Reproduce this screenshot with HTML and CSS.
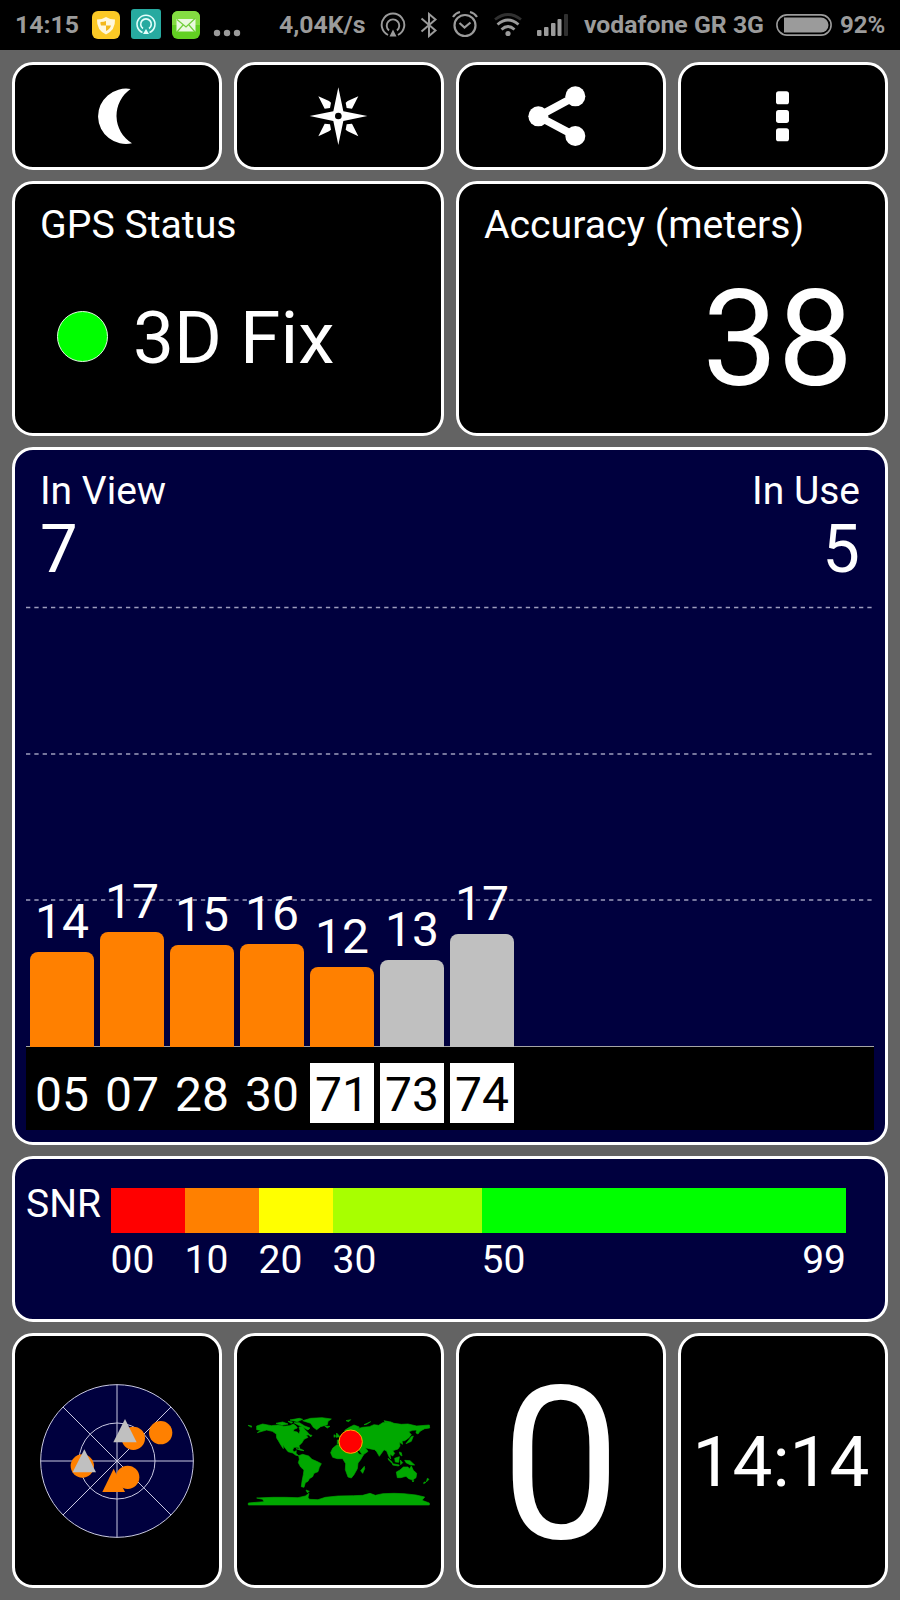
FILE: index.html
```html
<!DOCTYPE html>
<html lang="en">
<head>
    <meta charset="UTF-8">
    <meta name="viewport" content="width=device-width, initial-scale=1.0">
    <title>GPS Status</title>
    <link rel="stylesheet" href="styles.css">
</head>
<body>

    <header class="status-bar">
        <span class="time">14:15</span>
        <svg class="app-icon shield" viewBox="0 0 28 28">
            <rect width="28" height="28" rx="6" fill="#fbc926"/>
            <path d="M14 6 Q18 8.500 23 8.500 Q23.500 19 14 23.500 Q4.500 19 5 8.500 Q10 8.500 14 6 Z" fill="#fff8dc"/>
            <path d="M14 10 V14.500 H9 Q8.200 12.500 8.500 11 Q12 11 14 10 Z M14 14.500 H19 Q18 18 14 20 Z" fill="#f3b81c"/>
        </svg>
        <svg class="app-icon hotspot" viewBox="0 0 30 30">
            <rect width="30" height="30" rx="3" fill="#27aaa0"/>
            <g fill="none" stroke="#e4fffb" stroke-width="1.600">
                <path d="M11.500 23.500 A9 9 0 1 1 18.500 23.500"/>
                <path d="M12 19.500 A5.300 5.300 0 1 1 18 19.500"/>
            </g>
            <path d="M15 20 L18 25 H12 Z" fill="#e4fffb"/>
        </svg>
        <svg class="app-icon mail" viewBox="0 0 28 28">
            <rect width="28" height="28" rx="6" fill="#62d022"/>
            <path d="M0 14 V6 A6 6 0 0 1 6 0 H22 A6 6 0 0 1 28 6 V14 Z" fill="#84dc42"/>
            <path d="M4.500 8 H23.500 V20.500 H4.500 Z" fill="#e9f9df"/>
            <path d="M5 8.500 L14 16 L23 7.500 M5 21 L11 14 M23 21 L17 14" fill="none" stroke="#70cf3a" stroke-width="1.200"/>
        </svg>
        <svg class="more" viewBox="0 0 28 8">
            <g fill="#9b9b9b"><circle cx="4" cy="4" r="3.200"/><circle cx="14" cy="4" r="3.200"/><circle cx="24" cy="4" r="3.200"/></g>
        </svg>
        <span class="speed">4,04K/s</span>
        <svg class="cast" viewBox="0 0 26 26">
            <g fill="none" stroke="#9b9b9b" stroke-width="1.900">
                <path d="M8 23 A11.300 11.300 0 1 1 18 23"/>
                <path d="M9 18.500 A6.300 6.300 0 1 1 17 18.500"/>
            </g>
            <path d="M13 17.500 L16.500 24.500 H9.500 Z" fill="#9b9b9b"/>
        </svg>
        <svg class="bluetooth" viewBox="0 0 18 26">
            <path d="M1.500 6.500 L15.500 18.500 L9 24 V2 L15.500 7.500 L1.500 19.500" fill="none" stroke="#9b9b9b" stroke-width="2"/>
        </svg>
        <svg class="alarm" viewBox="0 0 26 28">
            <g fill="none" stroke="#9b9b9b" stroke-width="2.200">
                <circle cx="13" cy="15.500" r="10.500"/>
                <path d="M7.500 13 L12.500 17.500 L18.500 12.500"/>
                <path d="M1 7 Q3.500 3 8 2 M25 7 Q22.500 3 18 2"/>
            </g>
        </svg>
        <svg class="wifi" viewBox="0 0 28 24">
            <g fill="none" stroke-width="2.800">
                <path d="M1 6.500 Q14 -3.500 27 6.500" stroke="#303030"/>
                <path d="M3.500 11.500 Q14 2.500 24.500 11.500" stroke="#9b9b9b"/>
                <path d="M7.500 16.500 Q14 10.500 20.500 16.500" stroke="#9b9b9b"/>
            </g>
            <circle cx="14" cy="20.500" r="2.600" fill="#9b9b9b"/>
        </svg>
        <svg class="signal" viewBox="0 0 32 22">
            <g fill="#9b9b9b">
                <rect x="0" y="16" width="4.500" height="6" rx="1"/>
                <rect x="7" y="13" width="4.500" height="9" rx="1"/>
                <rect x="14" y="9" width="4.500" height="13" rx="1"/>
                <rect x="20.500" y="5" width="4" height="17" rx="1"/>
            </g>
            <rect x="27" y="0" width="4" height="22" rx="1" fill="#303030"/>
        </svg>
        <span class="carrier">vodafone GR 3G</span>
        <svg class="battery" viewBox="0 0 56 22">
            <rect x="0.900" y="0.900" width="54.200" height="20.200" rx="10.100" fill="none" stroke="#9b9b9b" stroke-width="1.600"/>
            <path d="M8 3.500 H45 A7.500 7.500 0 0 1 45 18.500 H8 Z" fill="#9b9b9b"/>
        </svg>
        <span class="percent">92%</span>
    </header>

    <main class="dashboard">
        <button class="panel tool">
            <svg width="60" height="60" viewBox="0 0 180 180">
                <path d="M131 9 A84 83 0 1 0 135 172 A97 97 0 0 1 131 9 Z" fill="#fff"/>
            </svg>
        </button>
        <button class="panel tool">
            <svg width="60" height="60" viewBox="0 0 180 180">
                <g fill="#fff">
                    <path d="M88 4 L103 76 L175 90 L103 105 L88 177 L73 105 L2 90 L73 76 Z"/>
                    <path d="M28 31 L60 45 L66 50 L63 66 L47 68 Z M148 31 L116 45 L110 50 L113 66 L129 68 Z M28 151 L60 136 L66 131 L63 115 L47 113 Z M148 151 L116 136 L110 131 L113 115 L129 113 Z"/>
                </g>
                <circle cx="88" cy="90" r="10" fill="#000"/>
            </svg>
        </button>
        <button class="panel tool">
            <svg width="66" height="66" viewBox="0 0 198 198">
                <path d="M142 40 L31 100 L142 159" fill="none" stroke="#fff" stroke-width="23"/>
                <g fill="#fff"><circle cx="31" cy="100" r="30"/><circle cx="142" cy="40" r="30"/><circle cx="142" cy="159" r="30"/></g>
            </svg>
        </button>
        <button class="panel tool">
            <svg width="60" height="60" viewBox="0 0 180 180">
                <g fill="#fff">
                    <rect x="69" y="16" width="39" height="39" rx="8"/>
                    <rect x="69" y="72" width="39" height="39" rx="8"/>
                    <rect x="69" y="127" width="39" height="39" rx="8"/>
                </g>
            </svg>
        </button>

        <section class="panel half">
            <h2 class="panel-title">GPS Status</h2>
            <div class="fix">
                <span class="fix-dot"></span>
                <span>3D Fix</span>
            </div>
        </section>
        <section class="panel half">
            <h2 class="panel-title">Accuracy (meters)</h2>
            <div class="accuracy">38</div>
        </section>

        <section class="panel satellites">
            <div class="counts">
                <div>In View<strong>7</strong></div>
                <div class="in-use">In Use<strong>5</strong></div>
            </div>
            <div class="chart">
                <svg class="gridlines" width="848" height="441" viewBox="0 0 848 441">
                    <path d="M0 1.500 H847 M0 148 H847 M0 294 H847" stroke="#9d9dbd" stroke-width="1.500" stroke-dasharray="4.300 4.030"/>
                </svg>
                <div class="bars">
                    <div class="sat">14<i class="bar" style="height: 95px"></i></div>
                    <div class="sat">17<i class="bar" style="height: 115px"></i></div>
                    <div class="sat">15<i class="bar" style="height: 102px"></i></div>
                    <div class="sat">16<i class="bar" style="height: 103px"></i></div>
                    <div class="sat">12<i class="bar" style="height: 80px"></i></div>
                    <div class="sat">13<i class="bar unused" style="height: 87px"></i></div>
                    <div class="sat">17<i class="bar unused" style="height: 113px"></i></div>
                </div>
            </div>
            <div class="ids">
                <span>05</span>
                <span>07</span>
                <span>28</span>
                <span>30</span>
                <span class="glonass">71</span>
                <span class="glonass">73</span>
                <span class="glonass">74</span>
            </div>
        </section>

        <section class="panel snr">
            <span class="snr-name">SNR</span>
            <div class="scale">
                <i class="red"></i>
                <i class="orange"></i>
                <i class="yellow"></i>
                <i class="lime"></i>
                <i class="green"></i>
                <span>00</span>
                <span>10</span>
                <span>20</span>
                <span>30</span>
                <span class="last"><span>50</span><span>99</span></span>
            </div>
        </section>

        <section class="panel tile radar-tile">
            <svg class="radar" width="154" height="154" viewBox="0 0 462 462">
                <circle cx="231" cy="231" r="229" fill="#00003e"/>
                <g fill="none" stroke="#c9c9e2" stroke-width="3">
                    <circle cx="231" cy="231" r="229"/>
                    <circle cx="231" cy="231" r="114"/>
                    <path d="M2 231 H460 M231 2 V460 M69 69 L393 393 M393 69 L69 393"/>
                </g>
                <g fill="#ff8000">
                    <circle cx="362" cy="146" r="35"/>
                    <circle cx="280" cy="163" r="35"/>
                    <circle cx="127" cy="246" r="35"/>
                    <circle cx="263" cy="280" r="35"/>
                    <path d="M221 254 L255 324 H187 Z"/>
                </g>
                <g fill="#c0c0c0">
                    <path d="M255 105 L290 175 H220 Z"/>
                    <path d="M133 196 L168 265 H98 Z"/>
                </g>
            </svg>
        </section>
        <section class="panel tile map-tile">
            <svg class="world" width="184" height="92" viewBox="49 50 552 276">
                <g fill="#00a800" stroke="#00a800" stroke-width="2" stroke-linejoin="round">
                    <!-- North and Central America -->
                    <path d="M52 78 L63 80 L62 84 Z M78 80 L96 74 L122 79 L142 77 L158 81 L178 79 L188 74 L196 80 L200 86 L190 90 L188 96 L200 98 L205 104 L208 94 L205 83 L216 82 L222 90 L230 98 L237 106 L226 108 L232 114 L220 120 L214 130 L205 139 L208 151 L202 144 L190 144 L186 152 L190 158 L197 154 L196 162 L204 169 L196 168 L186 161 L172 157 L165 148 L157 138 L158 148 L150 136 L143 124 L138 116 L137 104 L125 96 L108 92 L94 96 L80 100 L90 93 L78 91 Z"/>
                    <!-- Arctic islands and Greenland -->
                    <path d="M136 72 L156 68 L172 74 L154 78 Z M172 66 L186 68 L182 72 Z M178 62 L206 57 L216 60 L200 67 Z M190 70 L206 70 L222 80 L238 86 L232 92 L218 84 L204 78 Z M216 64 L240 57 L274 55 L302 59 L292 66 L290 76 L270 82 L258 91 L248 84 L240 72 Z M282 80 L298 81 L290 86 Z M234 106 L244 108 L240 113 Z"/>
                    <path d="M196 148 L212 150 L220 154 L210 153 Z"/>
                    <!-- South America -->
                    <path d="M204 169 L216 165 L234 170 L244 180 L258 186 L272 193 L266 204 L262 217 L250 222 L246 232 L236 238 L232 246 L224 250 L220 264 L212 262 L214 246 L218 226 L220 212 L210 203 L203 190 L206 180 Z M226 272 L236 276 L230 280 Z"/>
                    <!-- Europe and Asia -->
                    <path d="M320 134 L320 122 L332 121 L328 114 L342 108 L350 101 L342 93 L356 84 L370 77 L386 83 L382 88 L396 84 L416 82 L430 76 L444 78 L456 70 L478 67 L490 72 L512 75 L532 74 L558 80 L596 77 L597 86 L582 88 L568 96 L562 104 L556 101 L558 92 L546 93 L534 97 L542 106 L534 116 L522 124 L514 125 L516 135 L506 129 L508 140 L502 149 L486 154 L492 162 L486 170 L478 164 L480 179 L474 170 L468 155 L460 151 L446 171 L438 157 L432 151 L416 148 L404 145 L412 156 L396 168 L382 148 L376 136 L360 134 L350 137 L338 127 L330 133 Z"/>
                    <path d="M318 101 L328 112 L316 114 Z M310 106 L315 110 L310 114 Z M346 64 L360 61 L354 67 Z M400 76 L420 67 L408 75 Z M460 64 L474 67 L464 69 Z M542 112 L548 110 L542 126 L526 133 Z"/>
                    <!-- Africa -->
                    <path d="M318 137 L340 134 L352 142 L374 144 L384 164 L398 167 L390 181 L382 191 L380 208 L370 226 L362 236 L352 233 L344 211 L345 193 L336 178 L320 178 L306 174 L300 160 L306 147 Z M401 201 L402 208 L396 222 L390 214 Z"/>
                    <!-- South-East Asia and Australia -->
                    <path d="M472 177 L484 187 L486 194 L474 182 Z M492 177 L506 172 L504 189 L494 188 Z M486 193 L506 197 L504 200 L486 197 Z M509 182 L516 190 L510 196 Z M506 158 L512 160 L514 170 L508 166 Z M522 183 L538 184 L552 197 L540 197 L526 190 Z"/>
                    <path d="M497 218 L508 212 L518 203 L532 203 L536 209 L542 200 L548 213 L558 222 L556 235 L546 242 L534 238 L526 231 L510 235 L500 235 Z M544 244 L550 244 L547 248 Z M590 237 L595 240 L587 248 Z M580 248 L586 249 L579 253 Z"/>
                    <!-- Antarctica -->
                    <path d="M53 311 L100 307 L96 300 L78 296 L126 294 L164 294 L202 295 L224 290 L235 282 L232 294 L236 300 L262 301 L284 294 L322 290 L368 289 L396 288 L418 282 L434 288 L456 283 L490 282 L520 283 L556 287 L582 293 L574 303 L596 311 V317 H53 Z"/>
                </g>
                <circle cx="360" cy="127" r="35" fill="#f00" stroke="#ffb000" stroke-width="3"/>
            </svg>
        </section>
        <section class="panel tile speed-value">0</section>
        <section class="panel tile clock">14:14</section>
    </main>

</body>
</html>
```

FILE: styles.css
```css
:root {
    --navy: #00003e;
    --gray: #636363;
    --status: #9b9b9b;
    --orange: #ff8000;
}
* {
    box-sizing: border-box;
}
body {
    margin: 0;
    height: 1600px;
    background: var(--gray);
    color: white;
    font-family: Roboto, sans-serif;
}
svg {
    display: block;
    flex: none;
}

/* Status bar */
.status-bar {
    display: flex;
    align-items: center;
    height: 50px;
    padding-left: 15px;
    background: black;
    color: var(--status);
    font-size: 24.8px;
    font-weight: 700;
    line-height: 50px;
    white-space: nowrap;
}
.status-bar span {
    flex: none;
}
.time {
    width: 77px;
}
.app-icon {
    width: 28px;
    height: 28px;
}
.hotspot {
    width: 30px;
    height: 30px;
    margin: 0 11px 2px;
}
.more {
    width: 28px;
    height: 8px;
    margin: 15px 38px 0 13px;
}
.speed {
    width: 101px;
}
.cast {
    width: 26px;
    height: 26px;
}
.bluetooth {
    width: 18px;
    height: 26px;
    margin: 0 14px;
}
.alarm {
    width: 26px;
    height: 28px;
    margin-bottom: 2px;
}
.wifi {
    width: 28px;
    height: 24px;
    margin: 0 15px 0 16px;
}
.signal {
    width: 32px;
    height: 22px;
    margin-right: 15px;
}
.carrier {
    width: 192px;
}
.battery {
    width: 56px;
    height: 22px;
    margin-right: 8px;
}
.percent {
    font-size: 24px;
}

/* Panels */
.dashboard {
    display: grid;
    grid-template-columns: repeat(4, 210px);
    grid-template-rows: 108px 255px 698px 166px 255px;
    gap: 11px 12px;
    padding: 12px;
}
.panel {
    border: 3px solid white;
    border-radius: 21px;
    background: black;
    color: white;
}
.tool, .tile {
    display: flex;
    justify-content: center;
    align-items: center;
    padding: 0;
}
.half {
    grid-column: span 2;
    padding: 17px 32px 0 25px;
}
.panel-title {
    margin: 0;
    font-size: 39.2px;
    font-weight: 400;
    line-height: 48px;
}
.fix {
    display: flex;
    align-items: center;
    gap: 25px;
    margin: 49px 0 0 17px;
    font-size: 73px;
    line-height: 80px;
}
.fix-dot {
    width: 51px;
    height: 51px;
    margin-bottom: 3px;
    border: 1px solid #dfffdf;
    border-radius: 50%;
    background: #00ff00;
}
.accuracy {
    margin-top: 24px;
    font-size: 134px;
    line-height: 134px;
    text-align: right;
}

/* Satellite chart */
.satellites {
    grid-column: span 4;
    padding: 18px 11px 0 11px;
    background: var(--navy);
}
.counts {
    display: flex;
    justify-content: space-between;
    padding: 0 14px;
    font-size: 39px;
    line-height: 46px;
}
.counts strong {
    display: block;
    font-size: 67px;
    font-weight: 400;
    line-height: 70px;
}
.in-use {
    text-align: right;
}
.chart {
    display: grid;
    height: 441px;
    margin-top: 22px;
    border-bottom: 1px solid #a5a5a5;
}
.gridlines, .bars {
    grid-area: 1 / 1;
}
.bars, .ids {
    display: grid;
    grid-template-columns: repeat(7, 64px);
    column-gap: 6px;
    padding-left: 4px;
}
.bars {
    align-items: end;
}
.sat {
    font-size: 48px;
    line-height: 48px;
    text-align: center;
}
.bar {
    display: block;
    margin-top: 6px;
    border-radius: 8px 8px 0 0;
    background: var(--orange);
}
.unused {
    background: #c0c0c0;
}
.ids {
    height: 83px;
    padding-top: 16px;
    background: black;
    font-size: 48px;
    line-height: 60px;
    text-align: center;
}
.ids span {
    height: 60px;
    padding-top: 2px;
}
.ids .glonass {
    background: white;
    color: black;
}

/* Signal scale */
.snr {
    display: flex;
    grid-column: span 4;
    padding: 29px 0 0 11px;
    background: var(--navy);
    font-size: 39px;
    line-height: 46px;
}
.snr-name {
    width: 84.5px;
    margin-top: -7px;
}
.scale {
    display: grid;
    grid-template-columns: 74px 74px 74px 149px 364.5px;
    grid-template-rows: 45px 46px;
    row-gap: 4px;
}
.red {
    background: #ff0000;
}
.orange {
    background: var(--orange);
}
.yellow {
    background: #ffff00;
}
.lime {
    background: #a8ff00;
}
.green {
    background: #00ff00;
}
.last {
    display: flex;
    justify-content: space-between;
}

/* Bottom tiles */
.radar-tile {
    padding-right: 1px;
}
.map-tile {
    padding: 3px 1px 0 0;
}
.speed-value {
    padding-top: 8px;
    font-size: 214px;
    line-height: 214px;
}
.clock {
    padding: 2px 4px 0 0;
    font-size: 71px;
}
```
